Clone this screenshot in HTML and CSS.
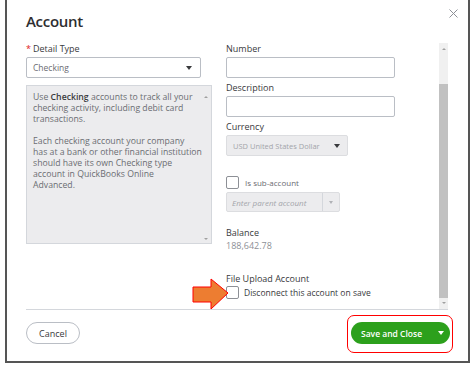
FILE: index.html
```html
<!DOCTYPE html>
<html>
    <head>
        <title>
            Account
        </title>
        <link rel="stylesheet" href="styles.css">
    </head>
    <body>
        <div class="dialog">
            <div class="head">
                <h1 class="title">Account</h1>
                <svg class="close" width="9" height="9" viewBox="0 0 9 9">
                    <path d="M0.5 0.5L8.5 8.5M8.5 0.5L0.5 8.5" stroke="#8d9096" stroke-width="1"/>
                </svg>
            </div>
            <div class="content">
                <div class="left">
                    <p class="label"><span class="req">*</span>Detail Type</p>
                    <div class="select">
                        <span>Checking</span>
                        <span class="caret"></span>
                    </div>
                    <div class="about">
                        <p>Use <b>Checking</b> accounts to track all your<br>checking activity, including debit card<br>transactions.</p>
                        <p>Each checking account your company<br>has at a bank or other financial institution<br>should have its own Checking type<br>account in QuickBooks Online<br>Advanced.</p>
                        <span class="mini up"></span>
                        <span class="mini down"></span>
                    </div>
                </div>
                <div class="right">
                    <p class="label">Number</p>
                    <div class="input"></div>
                    <p class="label">Description</p>
                    <div class="input"></div>
                    <p class="label">Currency</p>
                    <div class="select currency">
                        <span>USD United States Dollar</span>
                        <span class="caret"></span>
                    </div>
                    <div class="check-row sub">
                        <span class="box"></span>
                        <span>Is sub-account</span>
                    </div>
                    <div class="combo">
                        <span class="placeholder">Enter parent account</span>
                        <span class="combo-btn"><span class="caret light"></span></span>
                    </div>
                    <p class="label balance">Balance</p>
                    <p class="value">188,642.78</p>
                    <p class="label upload">File Upload Account</p>
                    <div class="check-row">
                        <span class="box"></span>
                        <span class="dark">Disconnect this account on save</span>
                    </div>
                </div>
                <div class="scrollbar">
                    <span class="mini up"></span>
                    <div class="thumb"></div>
                    <span class="mini down"></span>
                </div>
            </div>
            <div class="line"></div>
            <div class="foot">
                <button class="cancel">Cancel</button>
                <div class="highlight">
                    <button class="save"><span>Save and Close</span><span class="caret white"></span></button>
                </div>
            </div>
            <svg class="pointer" width="40" height="34" viewBox="0 0 40 34">
                <polygon points="1,9 19,9 19,1 36,15 19,31 19,24 1,24" fill="#ed7d31" stroke="#ff0000" stroke-width="1"/>
            </svg>
        </div>
    </body>
</html>
```

FILE: styles.css
```css
body{
    margin: 0;
    background-color: white;
    font-family: "Open Sans", "Liberation Sans", sans-serif;
}
p{
    margin: 0;
}
.dialog{
    position: relative;
    box-sizing: border-box;
    width: 465px;
    height: 363px;
    margin-left: 5px;
    border: 2px solid #555555;
    border-top: none;
    display: flex;
    flex-direction: column;
}
.head{
    height: 42px;
    display: flex;
    justify-content: space-between;
    align-items: flex-start;
    padding: 0 10px 0 19px;
}
.title{
    margin: 11px 0 0 0;
    font-size: 15px;
    line-height: 20px;
    font-weight: 600;
    letter-spacing: -0.3px;
    color: #2d2e31;
}
.close{
    margin-top: 9px;
}
.content{
    height: 267px;
    display: flex;
    padding-left: 19px;
}
.left{
    width: 186px;
}
.right{
    width: 169px;
    margin-left: 14px;
}
.label{
    font-size: 9px;
    line-height: 14px;
    color: #393a3d;
    margin-top: 3px;
}
.left .label,
.right .label:first-child{
    margin-top: 0;
}
.req{
    color: #e02020;
    margin-right: 2px;
}
.select{
    box-sizing: border-box;
    width: 175px;
    height: 21px;
    margin-top: 1px;
    border: 1px solid #babec5;
    border-radius: 2px;
    display: flex;
    justify-content: space-between;
    align-items: center;
    padding: 0 8px 0 6px;
    font-size: 8.5px;
    color: #6b6c72;
}
.caret{
    width: 0;
    height: 0;
    border-left: 3px solid transparent;
    border-right: 3px solid transparent;
    border-top: 4px solid #393a3d;
}
.caret.light{
    border-top-color: #b0b2b6;
    border-left-width: 2.5px;
    border-right-width: 2.5px;
    border-top-width: 3px;
}
.caret.white{
    border-top-color: white;
}
.about{
    position: relative;
    box-sizing: border-box;
    height: 159px;
    margin-top: 7px;
    background-color: #ececee;
    border: 1px solid #d4d7dc;
    padding: 6px 2px 0 6px;
    font-size: 8.7px;
    line-height: 11px;
    color: #6b6c72;
    white-space: nowrap;
}
.about p{
    margin-bottom: 11px;
}
.about b{
    color: #393a3d;
    font-weight: 600;
}
.mini{
    width: 0;
    height: 0;
    border-left: 2px solid transparent;
    border-right: 2px solid transparent;
}
.mini.up{
    border-bottom: 2px solid #a0a0a0;
}
.mini.down{
    border-top: 2px solid #a0a0a0;
}
.about .mini{
    position: absolute;
    right: 3px;
}
.about .up{
    top: 10px;
}
.about .down{
    bottom: 3px;
}
.input{
    box-sizing: border-box;
    height: 21px;
    margin-top: 1px;
    border: 1px solid #babec5;
    border-radius: 2px;
}
.currency{
    width: 122px;
    background-color: #ececee;
    border-color: #dcdde0;
    color: #a3a5aa;
    font-size: 7.5px;
    padding-right: 7px;
}
.check-row{
    display: flex;
    align-items: center;
    gap: 5px;
    font-size: 8.5px;
    color: #6b6c72;
}
.check-row.sub{
    margin-top: 20px;
    font-size: 8px;
    gap: 6px;
}
.box{
    box-sizing: border-box;
    width: 13px;
    height: 13px;
    border: 1px solid #8d9096;
    border-radius: 2px;
    background-color: white;
}
.dark{
    color: #393a3d;
}
.combo{
    box-sizing: border-box;
    width: 114px;
    height: 20px;
    margin-top: 3px;
    background-color: #ececee;
    border: 1px solid #dcdde0;
    border-radius: 2px;
    display: flex;
    align-items: center;
    font-size: 8px;
    font-style: italic;
    color: #a3a5aa;
}
.placeholder{
    flex: 1;
    padding-left: 5px;
}
.combo-btn{
    width: 16px;
    height: 18px;
    border-left: 1px solid #d4d7dc;
    display: flex;
    align-items: center;
    justify-content: center;
}
.balance{
    margin-top: 14px;
}
.value{
    font-size: 9px;
    line-height: 12px;
    color: #8d9096;
}
.upload{
    margin-top: 20px;
}
.scrollbar{
    width: 9px;
    height: 266px;
    margin-left: 44px;
    margin-top: 1px;
    background-color: #f0f0f0;
    display: flex;
    flex-direction: column;
    align-items: center;
}
.scrollbar .up{
    margin-top: 5px;
}
.scrollbar .thumb{
    width: 9px;
    height: 214px;
    margin-top: 34px;
    background-color: #c1c1c1;
}
.scrollbar .down{
    margin-top: 4px;
}
.line{
    height: 1px;
    width: 422px;
    margin-left: 19px;
    background-color: #d4d7dc;
}
.foot{
    flex: 1;
    display: flex;
    justify-content: space-between;
    align-items: flex-start;
    padding: 5px 15px 0 19px;
}
.cancel{
    box-sizing: border-box;
    width: 54px;
    height: 22px;
    margin-top: 7px;
    border: 1px solid #babec5;
    border-radius: 11px;
    background-color: white;
    font-family: inherit;
    font-size: 9px;
    color: #393a3d;
    padding: 0;
    cursor: pointer;
}
.highlight{
    border: 1px solid #ff0000;
    border-radius: 7px;
    padding: 6px 2px 8px 3px;
}
.save{
    box-sizing: border-box;
    width: 99px;
    height: 22px;
    border: none;
    border-radius: 11px;
    background-color: #2ca01c;
    color: white;
    font-family: inherit;
    font-size: 8.5px;
    font-weight: 600;
    white-space: nowrap;
    display: flex;
    align-items: center;
    justify-content: space-between;
    padding: 0 6px 0 10px;
    cursor: pointer;
}
.pointer{
    position: absolute;
    left: 185px;
    top: 278px;
}
```
